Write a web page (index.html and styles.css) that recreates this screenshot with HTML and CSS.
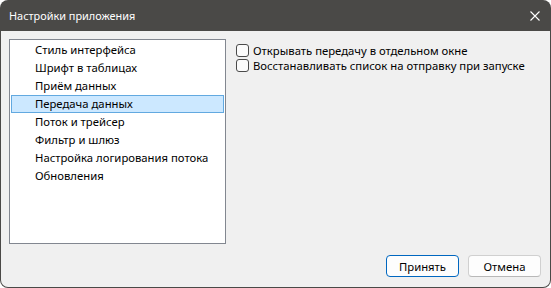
FILE: index.html
```html
<!DOCTYPE html>
<html lang="ru">
<head>
<meta charset="utf-8">
<title>Настройки приложения</title>
<link rel="stylesheet" href="styles.css">
</head>
<body>
<div class="window">
  <div class="titlebar">
    <span class="title">Настройки приложения</span>
    <svg class="close" width="10" height="10" viewBox="0 0 10 10"><path d="M0.5 0.5 L9.5 9.5 M9.5 0.5 L0.5 9.5" stroke="#ffffff" stroke-width="1.1" fill="none"/></svg>
  </div>
  <div class="content">
    <div class="main">
      <ul class="list">
        <li class="item">Стиль интерфейса</li>
        <li class="item">Шрифт в таблицах</li>
        <li class="item">Приём данных</li>
        <li class="item selected">Передача данных</li>
        <li class="item">Поток и трейсер</li>
        <li class="item">Фильтр и шлюз</li>
        <li class="item">Настройка логирования потока</li>
        <li class="item">Обновления</li>
      </ul>
      <div class="options">
        <label class="check"><span class="box"></span><span class="label">Открывать передачу в отдельном окне</span></label>
        <label class="check"><span class="box"></span><span class="label">Восстанавливать список на отправку при запуске</span></label>
      </div>
    </div>
    <div class="buttons">
      <button class="btn default">Принять</button>
      <button class="btn">Отмена</button>
    </div>
  </div>
</div>
</body>
</html>
```
FILE: styles.css
```css
html, body {
  margin: 0;
  padding: 0;
  background: #ffffff;
}
body {
  font-family: "Noto Sans", "Open Sans", sans-serif;
  font-size: 11.3px;
  color: #000;
}
.window {
  width: 551px;
  height: 288px;
  box-sizing: border-box;
  background: #4a4947;
  border-radius: 8px;
  overflow: hidden;
  display: flex;
  flex-direction: column;
  padding: 0 1px 1px 1px;
}
.titlebar {
  height: 31px;
  flex: none;
  display: flex;
  align-items: center;
  justify-content: space-between;
  padding: 0 10px 0 8px;
  color: #ffffff;
}
.title {
  font-size: 10.9px;
  line-height: 16px;
}
.close {
  display: block;
}
.content {
  flex: 1;
  background: #f0f0f0;
  border-radius: 0 0 7px 7px;
  display: flex;
  flex-direction: column;
  padding: 8px 9px 10px 8px;
  gap: 11px;
}
.main {
  flex: 1;
  display: flex;
  gap: 10px;
  min-height: 0;
}
.list {
  margin: 0;
  padding: 1px 0;
  list-style: none;
  width: 217px;
  height: 205px;
  box-sizing: border-box;
  background: #fff;
  border: 1px solid #828790;
}
.item {
  height: 18px;
  line-height: 18px;
  padding-left: 24px;
  margin: 0 1px;
  box-sizing: border-box;
  white-space: nowrap;
}
.item.selected {
  background: #cce8ff;
  border: 1px solid #62a9e0;
  line-height: 16px;
  padding-left: 23px;
}
.options {
  display: flex;
  flex-direction: column;
  padding-top: 4px;
}
.check {
  display: flex;
  align-items: center;
  height: 15px;
  line-height: 15px;
  gap: 4px;
  white-space: nowrap;
}
.box {
  width: 13px;
  height: 13px;
  box-sizing: border-box;
  border: 1px solid #4a4a4a;
  border-radius: 3px;
  background: #fbfbfb;
  flex: none;
}
.buttons {
  display: flex;
  justify-content: flex-end;
  gap: 9px;
  height: 22px;
}
.btn {
  font-family: inherit;
  font-size: 11.3px;
  color: #000;
  width: 73px;
  height: 22px;
  padding: 0;
  background: #fdfdfd;
  border: 1px solid #d0d0d0;
  border-bottom-color: #b8b8b8;
  border-radius: 4px;
}
.btn.default {
  border: 1px solid #0067c0;
}
```
